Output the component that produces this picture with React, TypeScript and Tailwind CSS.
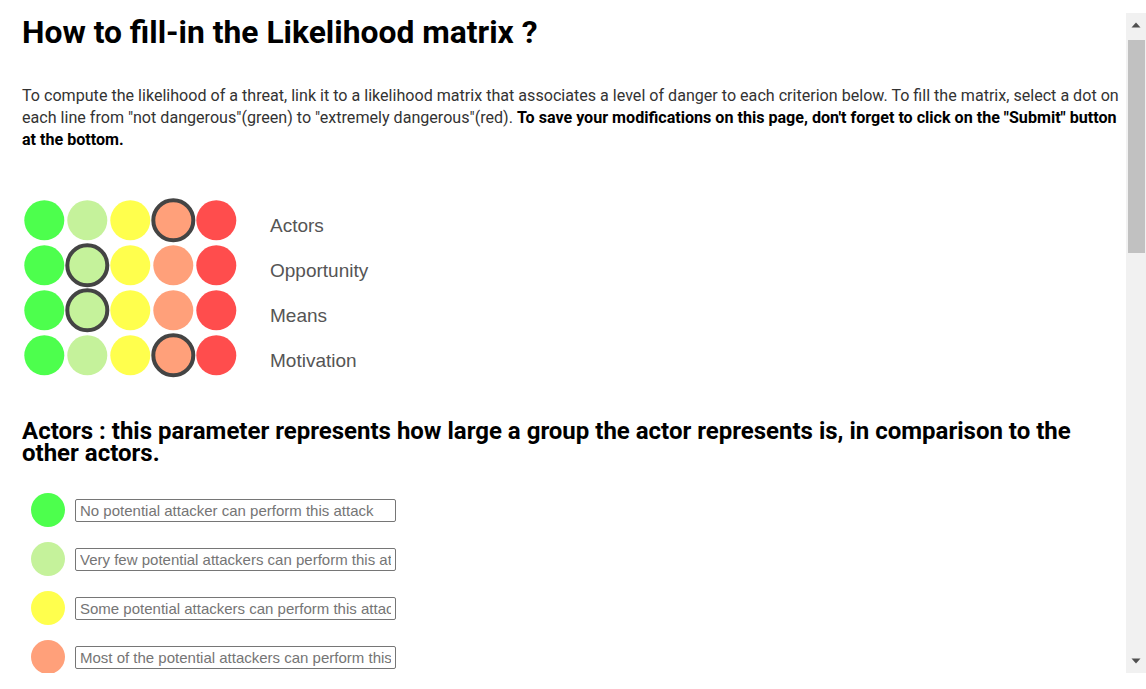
import { useState } from "react";

const levels = ["#4dff4d", "#c5f29b", "#ffff4d", "#ffa07a", "#ff4d4d"];
const dotClasses = [
  "bg-[#4dff4d]",
  "bg-[#c5f29b]",
  "bg-[#ffff4d]",
  "bg-[#ffa07a]",
  "bg-[#ff4d4d]",
];

const criteria = [
  { name: "Actors", value: 3 },
  { name: "Opportunity", value: 1 },
  { name: "Means", value: 1 },
  { name: "Motivation", value: 3 },
];

const sections = [
  {
    title:
      "Actors : this parameter represents how large a group the actor represents is, in comparison to the other actors.",
    items: [
      "No potential attacker can perform this attack",
      "Very few potential attackers can perform this attack",
      "Some potential attackers can perform this attack",
      "Most of the potential attackers can perform this attack",
      "All potential attackers can perform this attack",
    ],
  },
  {
    title:
      "Opportunity : this parameter represents how often the conditions needed to perform the attack are met.",
    items: [
      "The conditions are never met",
      "The conditions are rarely met",
      "The conditions are sometimes met",
      "The conditions are often met",
      "The conditions are always met",
    ],
  },
];

function Matrix() {
  const [values, setValues] = useState(criteria.map((c) => c.value));
  return (
    <div className="mt-[47px] flex items-start">
      <svg width="222" height="182" className="shrink-0">
        {values.map((v, row) =>
          levels.map((color, col) => (
            <circle
              key={`${row}-${col}`}
              cx={22.3 + col * 43}
              cy={22.3 + row * 45}
              r={20}
              fill={color}
              stroke={v === col ? "#444444" : "none"}
              strokeWidth={4}
              className="cursor-pointer"
              onClick={() =>
                setValues(values.map((x, i) => (i === row ? col : x)))
              }
            />
          ))
        )}
      </svg>
      <div className="ml-[26px] mt-[5px] flex flex-col font-['Liberation_Sans',Arial,sans-serif] text-[19px] text-[#555555]">
        {criteria.map((c) => (
          <div key={c.name} className="h-[45px] leading-[45px]">
            {c.name}
          </div>
        ))}
      </div>
    </div>
  );
}

function Section({ title, items }: { title: string; items: string[] }) {
  return (
    <div>
      <h2 className="mt-[37px] max-w-[1080px] text-[24px] font-bold leading-[22px] text-black">
        {title}
      </h2>
      <div className="mt-[29px] flex flex-col gap-[15px]">
        {items.map((text, i) => (
          <div key={text} className="flex h-[34px] items-center">
            <div
              className={
                "ml-[9px] h-[34px] w-[34px] shrink-0 rounded-full " +
                dotClasses[i]
              }
            />
            <input
              type="text"
              placeholder={text}
              className="ml-[10px] h-[23px] w-[321px] rounded-[2px] border border-[#767676] px-[4px] font-['Liberation_Sans',Arial,sans-serif] text-[15px] text-black outline-none placeholder:text-[#757575]"
            />
          </div>
        ))}
      </div>
    </div>
  );
}

function Arrow({ down }: { down?: boolean }) {
  return (
    <div className="flex h-[24px] items-center justify-center">
      <svg width="10" height="6" viewBox="0 0 10 6">
        <polygon
          points={down ? "0.5,0.5 9.5,0.5 5,5.5" : "0.5,5.5 9.5,5.5 5,0.5"}
          fill="#505050"
        />
      </svg>
    </div>
  );
}

function Scrollbar() {
  return (
    <div className="flex w-[20px] shrink-0 flex-col bg-[#f1f1f1]">
      <Arrow />
      <div className="ml-[2px] mr-[1px] mt-[3px] h-[213px] bg-[#c1c1c1]" />
      <div className="flex-1" />
      <Arrow down />
    </div>
  );
}

export default function App() {
  return (
    <div className="h-[689px] bg-white pt-[13px] font-['Roboto',sans-serif]">
      <div className="flex h-[660px]">
        <div className="min-w-0 flex-1 overflow-hidden pl-[22px] pr-[4px]">
          <h1 className="text-[31.8px] font-bold leading-[38px] text-black">
            How to fill-in the Likelihood matrix ?
          </h1>
          <p className="mt-[34px] text-[16.1px] leading-[22px] text-[#333333]">
            To compute the likelihood of a threat, link it to a likelihood
            matrix that associates a level of danger to each criterion below.
            To fill the matrix, select a dot on each line from "not
            dangerous"(green) to "extremely dangerous"(red).{" "}
            <b className="text-black">
              To save your modifications on this page, don't forget to click on
              the "Submit" button at the bottom.
            </b>
          </p>
          <Matrix />
          {sections.map((s) => (
            <Section key={s.title} title={s.title} items={s.items} />
          ))}
        </div>
        <Scrollbar />
      </div>
    </div>
  );
}
